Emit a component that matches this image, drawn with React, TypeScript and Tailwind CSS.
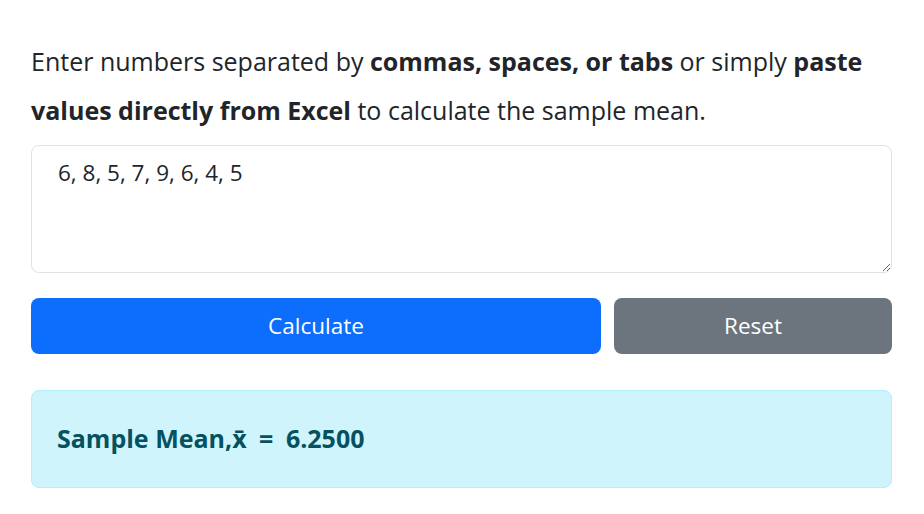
import React from "react";

export default function App() {
  return (
    <div className="w-[924px] h-[514px] bg-white text-[#212529] overflow-hidden" style={{ fontFamily: '"Open Sans", "Noto Sans", sans-serif' }}>
      <div className="px-[31px] pt-[37px] pr-[32px]">
        <p className="text-[25px] leading-[49px]">
          Enter numbers separated by <b>commas, spaces, or tabs</b> or simply <b>paste values directly from Excel</b> to calculate the sample mean.
        </p>
        <textarea
          className="mt-[10px] block w-full h-[128px] border border-[#dee2e6] rounded-[8px] px-[26px] py-[11px] text-[22.5px] leading-[32px] resize-y outline-none"
          defaultValue="6, 8, 5, 7, 9, 6, 4, 5"
        />
        <div className="flex gap-[13px] mt-[25px]">
          <button className="w-[570px] h-[56px] bg-[#0d6efd] text-white rounded-[8px] text-[22.5px]">Calculate</button>
          <button className="flex-1 h-[56px] bg-[#6c757d] text-white rounded-[8px] text-[22.5px]">Reset</button>
        </div>
        <div className="mt-[36px] h-[98px] bg-[#cff4fc] border border-[#b6effb] rounded-[8px] flex items-center px-[25px]">
          <span className="text-[25px] font-bold text-[#055160] whitespace-pre">
            Sample Mean,x̄ <span className="mx-[6px]">=</span> 6.2500
          </span>
        </div>
      </div>
    </div>
  );
}
